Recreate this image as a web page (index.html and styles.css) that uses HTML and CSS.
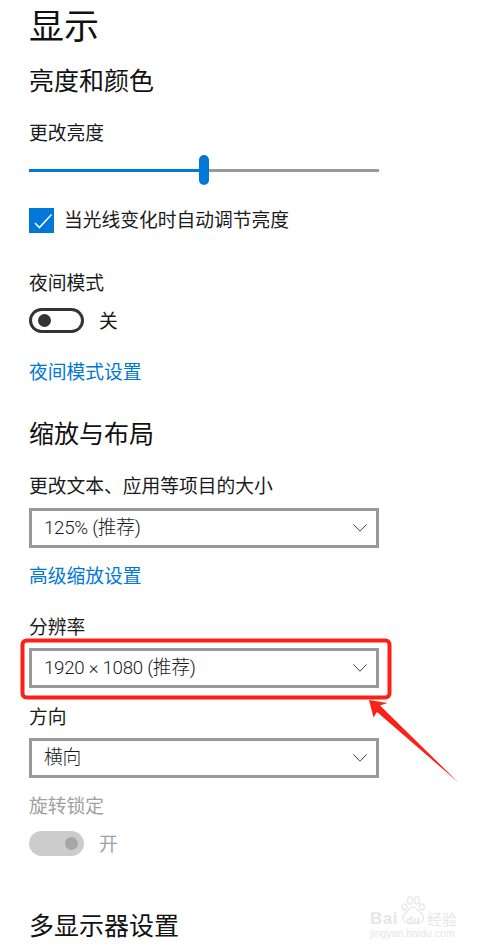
FILE: index.html
```html
<!DOCTYPE html>
<html lang="zh-CN">
<head>
<meta charset="utf-8">
<title>显示</title>
<link rel="stylesheet" href="styles.css">
</head>
<body>
<main class="page">
  <h1 class="title">显示</h1>

  <h2 class="heading heading-first">亮度和颜色</h2>
  <div class="label label-brightness">更改亮度</div>
  <div class="slider">
    <div class="slider-fill"></div>
    <div class="slider-thumb"></div>
    <div class="slider-rest"></div>
  </div>
  <div class="check-row">
    <span class="checkbox">
      <svg class="check-icon" viewBox="0 0 25 25" width="25" height="25"><path d="M6 15l4.400 4.600L22.500 6.500" fill="none" stroke="#fff" stroke-width="1.500"/></svg>
    </span>
    <span class="body-text">当光线变化时自动调节亮度</span>
  </div>

  <div class="label label-night">夜间模式</div>
  <div class="toggle-row">
    <span class="toggle toggle-off"><span class="knob knob-off"></span></span>
    <span class="body-text">关</span>
  </div>
  <a class="link link-night">夜间模式设置</a>

  <h2 class="heading heading-scale">缩放与布局</h2>
  <div class="label label-size">更改文本、应用等项目的大小</div>
  <div class="select select-size">
    <span class="select-text">125% (推荐)</span>
    <svg class="chevron" viewBox="0 0 14 8" width="14" height="8"><path d="M.4.4L7 7.2 13.6.4" fill="none" stroke="#444" stroke-width="1"/></svg>
  </div>
  <a class="link link-scale">高级缩放设置</a>

  <div class="label label-res">分辨率</div>
  <div class="select select-res">
    <span class="select-text">1920 × 1080 (推荐)</span>
    <svg class="chevron" viewBox="0 0 14 8" width="14" height="8"><path d="M.4.4L7 7.2 13.6.4" fill="none" stroke="#444" stroke-width="1"/></svg>
  </div>
  <div class="label label-orient">方向</div>
  <div class="select select-orient">
    <span class="select-text">横向</span>
    <svg class="chevron" viewBox="0 0 14 8" width="14" height="8"><path d="M.4.4L7 7.2 13.6.4" fill="none" stroke="#444" stroke-width="1"/></svg>
  </div>

  <div class="label label-lock">旋转锁定</div>
  <div class="toggle-row toggle-row-disabled">
    <span class="toggle toggle-on"><span class="knob knob-on"></span></span>
    <span class="body-text">开</span>
  </div>

  <h2 class="heading heading-multi">多显示器设置</h2>
</main>

<svg class="annotation" viewBox="0 0 487 950" width="487" height="950" aria-hidden="true">
  <rect x="22.5" y="640.5" width="367" height="57" rx="4" fill="none" stroke="#fb2116" stroke-width="4"/>
  <path d="M369 700L387.5 703L380 705.5L459 783L377 712L373.5 717.5Z" fill="#fb2116"/>
</svg>

<div class="watermark">
  <div class="wm-main">
    <span class="wm-bai">Bai</span>
    <span class="wm-paw">
      <svg class="paw" viewBox="0 0 26 28" width="26" height="28"><g fill="none" stroke="#e6e6e6" stroke-width="1.2"><ellipse cx="4.5" cy="11" rx="2.4" ry="3.2"/><ellipse cx="10" cy="4.5" rx="2.4" ry="3.6"/><ellipse cx="17" cy="4.5" rx="2.4" ry="3.6"/><ellipse cx="22" cy="11" rx="2.4" ry="3.2"/><path d="M13 11c-3 0-4 3-6.500 5C4 18 2.500 20 3 23c.5 3 4 4.500 10 4.500s10-1.500 10.500-4.500c.5-3-1-5-3.500-7C17 14 16 11 13 11z"/></g></svg>
      <span class="wm-du">du</span>
    </span>
    <span class="wm-cn">经验</span>
  </div>
  <div class="wm-url">jingyan.baidu.com</div>
</div>
</body>
</html>
```

FILE: styles.css
```css
* { box-sizing: border-box; }

html, body {
  margin: 0;
  padding: 0;
  background: #fff;
}

body {
  position: relative;
  width: 487px;
  height: 950px;
  overflow: hidden;
  font-family: "Noto Sans", "Noto Sans CJK SC", sans-serif;
  color: #1a1a1a;
}

.page {
  display: flex;
  flex-direction: column;
  align-items: flex-start;
  width: 350px;
  margin-left: 29px;
}

.title {
  margin: 0;
  font-size: 35px;
  font-weight: 400;
  line-height: 52px;
  color: #111;
}

.heading {
  margin: 0;
  font-size: 25px;
  font-weight: 400;
  line-height: 34px;
  color: #111;
}

.heading-first { margin-top: 11px; }
.heading-scale { margin-top: 31px; }
.heading-multi { margin-top: 52px; }

.label,
.link,
.body-text {
  font-size: 18.75px;
  line-height: 26px;
}

.label-brightness { margin-top: 23px; }
.label-night { margin-top: 37px; }
.label-size { margin-top: 23px; }
.label-res { margin-top: 25px; }
.label-orient { margin-top: 16px; }
.label-lock { margin-top: 15px; color: #a0a0a0; }

.link { color: #0078d7; }
.link-night { margin-top: 26px; }
.link-scale { margin-top: 15px; }

.slider {
  display: flex;
  align-items: center;
  width: 350px;
  height: 30px;
  margin-top: 9px;
}

.slider-fill {
  width: 170px;
  height: 3px;
  background: #0078d7;
}

.slider-thumb {
  width: 10px;
  height: 30px;
  border-radius: 5px;
  background: #0078d7;
}

.slider-rest {
  flex: 1;
  height: 3px;
  background: #999;
}

.check-row {
  display: flex;
  align-items: center;
  gap: 10px;
  height: 26px;
  margin-top: 22px;
}

.checkbox {
  display: block;
  width: 25px;
  height: 25px;
  background: #0078d7;
}

.check-icon { display: block; }

.toggle-row {
  display: flex;
  align-items: center;
  gap: 15px;
  height: 25px;
  margin-top: 12px;
}

.toggle {
  display: flex;
  align-items: center;
  width: 55px;
  height: 25px;
  border-radius: 13px;
}

.toggle-off {
  padding-left: 6px;
  border: 3px solid #333;
}

.toggle-on {
  justify-content: flex-end;
  padding-right: 6px;
  background: #ccc;
}

.knob {
  display: block;
  width: 13px;
  height: 13px;
  border-radius: 50%;
}

.knob-off { background: #333; }
.knob-on { background: #a6a6a6; }

.toggle-row-disabled .body-text { color: #a0a0a0; }

.select {
  display: flex;
  align-items: center;
  justify-content: space-between;
  width: 350px;
  height: 40px;
  padding: 0 9px 0 12px;
  border: 3px solid #999;
  color: #1a1a1a;
}

.select-text {
  font-family: Roboto, "Noto Sans CJK SC", sans-serif;
  font-size: 18.75px;
  font-weight: 300;
  letter-spacing: -.3px;
  line-height: 26px;
}

.select-size { margin-top: 9px; }
.select-res { margin-top: 8px; }
.select-orient { margin-top: 8px; }

.annotation {
  position: absolute;
  left: 0;
  top: 0;
  pointer-events: none;
}

.watermark {
  position: absolute;
  left: 370px;
  top: 897px;
  width: 90px;
  color: #e6e6e6;
}

.wm-main {
  display: flex;
  align-items: center;
  height: 18px;
  margin-top: 13px;
}

.wm-bai {
  width: 29px;
  font-family: "Liberation Sans", sans-serif;
  font-size: 17px;
  font-weight: 700;
  letter-spacing: .5px;
  line-height: 18px;
}

.wm-paw {
  position: relative;
  display: flex;
  justify-content: center;
  width: 28px;
}

.paw {
  position: absolute;
  left: 1px;
  top: -15px;
}

.wm-du {
  position: relative;
  margin-top: 2px;
  font-family: "Liberation Sans", sans-serif;
  font-size: 11px;
  font-weight: 700;
  line-height: 14px;
}

.wm-cn {
  font-size: 15px;
  line-height: 18px;
}

.wm-url {
  font-family: "Liberation Sans", sans-serif;
  font-size: 10.5px;
  line-height: 12px;
  margin-top: -1px;
  white-space: nowrap;
}
```
